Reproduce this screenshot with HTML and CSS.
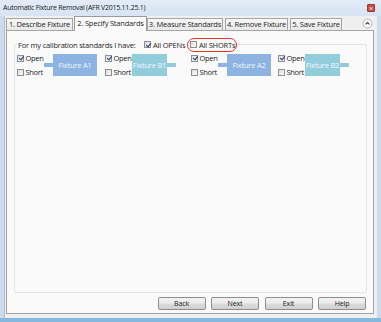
FILE: index.html
```html
<!DOCTYPE html>
<html>
<head>
<meta charset="utf-8">
<link rel="stylesheet" href="styles.css">
</head>
<body>
<div class="window">
  <div class="titlebar">
    <span class="title">Automatic Fixture Removal (AFR V2015.11.25.1)</span>
    <span class="close"><svg width="7" height="7" viewBox="0 0 7 7"><path d="M2 2 L5 5 M5 2 L2 5" stroke="#fff" stroke-width="1.1"/></svg></span>
  </div>
  <div class="client">
    <div class="tabs">
      <div class="tab t1">1. Describe Fixture</div>
      <div class="tab t2 active">2. Specify Standards</div>
      <div class="tab t3">3. Measure Standards</div>
      <div class="tab t4">4. Remove Fixture</div>
      <div class="tab t5">5. Save Fixture</div>
      <div class="collapse"><svg width="11" height="11" viewBox="0 0 11 11"><circle cx="5.5" cy="5.5" r="4.5" fill="#fbfbfb" stroke="#b5b5b5"/><path d="M3.6 6.4 L5.5 4.5 L7.4 6.4" fill="none" stroke="#3c3c3c" stroke-width="1.1"/></svg></div>
    </div>
    <div class="page">
      <div class="group">
        <div class="header">
          <span class="label">For my calibration standards I have:</span>
          <label class="cb opens"><span class="box checked"></span>All OPENs</label>
          <label class="cb shorts"><span class="box"></span>All SHORTs</label>
        </div>
        <div class="fixtures">
          <div class="fx f1">
            <div class="opts">
              <label class="cb"><span class="box checked"></span>Open</label>
              <label class="cb"><span class="box"></span>Short</label>
            </div>
            <span class="wire a"></span>
            <div class="fbox a">Fixture A1</div>
          </div>
          <div class="fx f2">
            <div class="opts">
              <label class="cb"><span class="box checked"></span>Open</label>
              <label class="cb"><span class="box"></span>Short</label>
            </div>
            <div class="fbox b">Fixture B1</div>
            <span class="wire b"></span>
          </div>
          <div class="fx f3">
            <div class="opts">
              <label class="cb"><span class="box checked"></span>Open</label>
              <label class="cb"><span class="box"></span>Short</label>
            </div>
            <span class="wire a"></span>
            <div class="fbox a">Fixture A2</div>
          </div>
          <div class="fx f4">
            <div class="opts">
              <label class="cb"><span class="box checked"></span>Open</label>
              <label class="cb"><span class="box"></span>Short</label>
            </div>
            <div class="fbox b">Fixture B2</div>
            <span class="wire b"></span>
          </div>
        </div>
      </div>
      <div class="buttons">
        <button class="btn">Back</button>
        <button class="btn">Next</button>
        <button class="btn">Exit</button>
        <button class="btn">Help</button>
      </div>
    </div>
  </div>
</div>
</body>
</html>
```
FILE: styles.css
```css
* { box-sizing: border-box; }
html, body { margin: 0; padding: 0; }
body {
  width: 381px; height: 322px; overflow: hidden;
  font-family: "Open Sans", "Liberation Sans", sans-serif;
  font-size: 7.5px; letter-spacing: -0.2px; color: #1e1e1e;
}
.window {
  width: 381px; height: 322px;
  background: linear-gradient(90deg, #c9dcf0, #d6e4f4 50%, #c9dcf0);
  display: flex; flex-direction: column;
  border-bottom: 4px solid #86b9de;
}
.titlebar {
  height: 16px; flex: none;
  display: flex; align-items: flex-start; justify-content: space-between;
  padding: 3px 6px 0 3px;
  background: linear-gradient(#e3ecf7, #d7e4f3);
}
.title { font-size: 7px; color: #1a1a1a; line-height: 10px; letter-spacing: -0.25px; }
.close {
  width: 8px; height: 8px; background: #c74b40; border-radius: 1px;
  display: flex; align-items: center; justify-content: center;
  border: 1px solid #a13c33; margin-top: 1px;
}
.client {
  flex: 1; margin: 0 4px 0 4px;
  background: #f0f0f0;
  border-left: 1px solid #b4bcc5;
  padding: 0 3px 4px 1px;
  display: flex; flex-direction: column;
}
.tabs { display: flex; align-items: flex-end; height: 14px; position: relative; flex: none; }
.tab {
  height: 12px;
  background: linear-gradient(#f7f7f7, #e9e9e9);
  border: 1px solid #a5a5a5; border-bottom: none;
  line-height: 11px; white-space: nowrap; text-align: center;
}
.t1 { width: 67px; }
.t2 { width: 73px; margin-left: 1px; }
.t3 { width: 76px; }
.t4 { width: 63px; margin-left: 2px; }
.t5 { width: 52px; margin-left: 2px; }
.tab.active {
  height: 15px; background: #fbfbfb; line-height: 12px;
  position: relative; top: 1px; z-index: 1; border-color: #9a9a9a;
}
.collapse { margin-left: auto; margin-right: 1px; height: 12px; display: flex; align-items: center; position: relative; top: -1px; }
.page {
  flex: 1; background: #fafafa; border: 1px solid #a5a5a5;
  padding: 13px 6px 3px 7px;
  display: flex; flex-direction: column;
}
.group {
  flex: 1; border: 1px solid #dfe4e8; border-radius: 2px;
  padding: 0 0 0 2px;
}
.header { display: flex; align-items: center; height: 13px; margin-top: -7px; }
.header .label { background: #fafafa; padding: 0 0 0 1px; width: 127px; white-space: nowrap; }
.cb { display: inline-flex; align-items: center; white-space: nowrap; line-height: 8px; }
.header .cb { background: #fafafa; }
.opens { width: 46px; }
.shorts { position: relative; }
.shorts::after {
  content: ""; position: absolute; left: -3px; right: -2px; top: -3px; bottom: -3px;
  border: 1px solid #e2302b; border-radius: 7px;
}
.box {
  width: 7px; height: 7px; border: 1px solid #8d8f91; flex: none;
  background: linear-gradient(135deg, #dcdcdc, #fbfbfb); margin-right: 2px; position: relative;
}
.box.checked::after {
  content: ""; position: absolute; left: 1.5px; top: -0.5px; width: 2px; height: 4px;
  border: solid #263a8a; border-width: 0 1.2px 1.2px 0; transform: rotate(38deg);
}
.fixtures { display: flex; margin-top: 3px; padding-left: 0; }
.fx { display: flex; align-items: center; flex: none; }
.f1 { width: 88px; }
.f2 { width: 86px; }
.f3 { width: 87px; }
.opts { display: flex; flex-direction: column; justify-content: space-between; height: 22px; padding: 0; }
.opts .cb { letter-spacing: -0.3px; }
.opts .box { margin-right: 1.5px; }
.f1 .opts, .f3 .opts { width: 27px; }
.f2 .opts, .f4 .opts { width: 27px; }
.fbox {
  width: 44px; height: 22px; color: #f2f7fc; flex: none;
  display: flex; align-items: center; justify-content: center;
}
.fbox.b { width: 35px; }
.fbox.a { background: #8db3e2; }
.fbox.b { background: #92cddc; }
.wire { width: 9px; height: 4px; flex: none; }
.wire.a { background: #8db3e2; }
.wire.b { background: #92cddc; }
.buttons { display: flex; justify-content: flex-end; gap: 5.5px; margin-top: 4px; padding-right: 1px; }
.btn {
  width: 48px; height: 13px; padding: 0;
  font-family: inherit; font-size: 7px; letter-spacing: -0.1px; color: #222; line-height: 11px;
  border: 1px solid #8e8e8e; border-radius: 2px;
  background: linear-gradient(#f3f3f3, #ebebeb 48%, #dcdcdc 52%, #d0d0d0);
}
```
